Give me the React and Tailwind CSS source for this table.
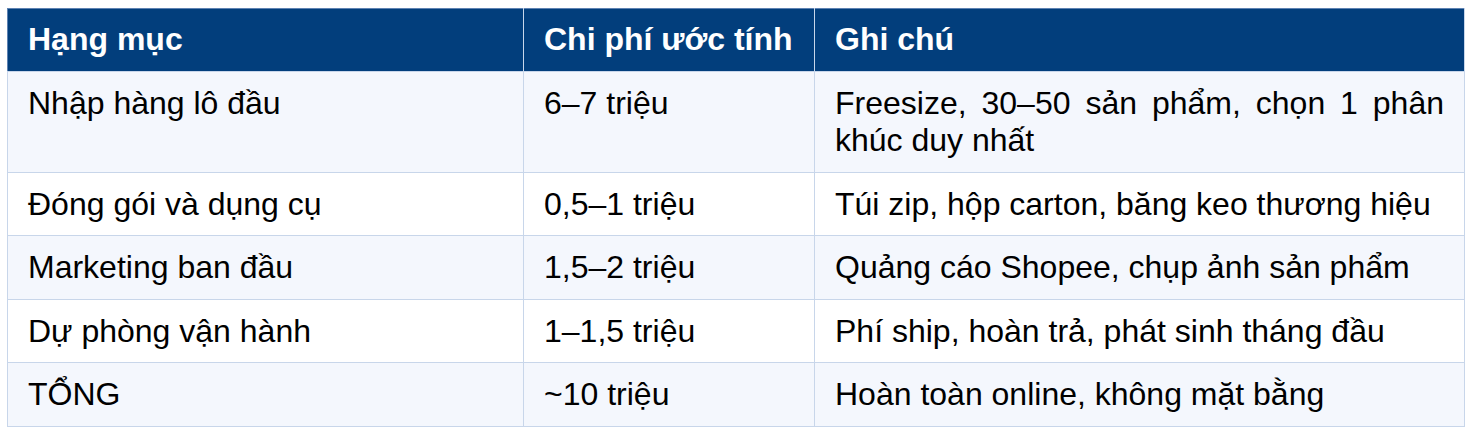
import React from "react";

const rows = [
  ["Nhập hàng lô đầu", "6–7 triệu", "Freesize, 30–50 sản phẩm, chọn 1 phân khúc duy nhất"],
  ["Đóng gói và dụng cụ", "0,5–1 triệu", "Túi zip, hộp carton, băng keo thương hiệu"],
  ["Marketing ban đầu", "1,5–2 triệu", "Quảng cáo Shopee, chụp ảnh sản phẩm"],
  ["Dự phòng vận hành", "1–1,5 triệu", "Phí ship, hoàn trả, phát sinh tháng đầu"],
  ["TỔNG", "~10 triệu", "Hoàn toàn online, không mặt bằng"],
];

export default function App() {
  return (
    <div className="w-[1479px] h-[436px] bg-white pt-[8px] pl-[7px]" style={{ fontFamily: '"Liberation Sans", Arial, sans-serif' }}>
      <table className="table-fixed border-collapse w-[1457px] text-[32px] leading-[37px] text-black">
        <colgroup>
          <col className="w-[516px]" />
          <col className="w-[291px]" />
          <col className="w-[650px]" />
        </colgroup>
        <thead>
          <tr className="bg-[#023e7c] text-white">
            <th className="text-left font-bold px-[20px] pt-[12px] pb-[13px] border border-[#c8d6ea] border-t-[#5e82b2] border-l-[#5e82b2]">Hạng mục</th>
            <th className="text-left font-bold px-[20px] pt-[12px] pb-[13px] border border-[#c8d6ea] border-t-[#5e82b2]">Chi phí ước tính</th>
            <th className="text-left font-bold px-[20px] pt-[12px] pb-[13px] border border-[#c8d6ea] border-t-[#5e82b2]">Ghi chú</th>
          </tr>
        </thead>
        <tbody>
          {rows.map((r, i) => (
            <tr key={i} className={i % 2 === 0 ? "bg-[#f4f7fd]" : "bg-white"}>
              <td className="align-top px-[20px] pt-[13px] pb-[12.5px] border border-[#c8d6ea]">{r[0]}</td>
              <td className="align-top px-[20px] pt-[13px] pb-[12.5px] border border-[#c8d6ea]">{r[1]}</td>
              <td className="align-top px-[20px] pt-[13px] pb-[12.5px] border border-[#c8d6ea] text-justify">{r[2]}</td>
            </tr>
          ))}
        </tbody>
      </table>
    </div>
  );
}
